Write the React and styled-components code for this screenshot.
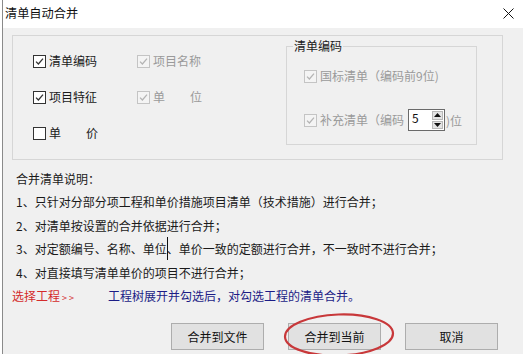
import React from "react";
import styled, { createGlobalStyle } from "styled-components";

const GlobalStyle = createGlobalStyle`
    html, body {
        margin: 0;
        padding: 0;
        background: #ffffff;
    }
    body {
        font-family: "Noto Sans CJK SC", "Noto Sans", sans-serif;
        font-size: 12px;
        color: #1a1a1a;
    }
`;

const CheckMark = ({ color }) => (
    <svg width="11" height="11" viewBox="0 0 11 11">
        <path d="M2 5.6 L4.4 8 L9 2.6" fill="none" stroke={color} strokeWidth="1.3" />
    </svg>
);

const CheckItem = ({ checked, disabled, children }) => (
    <Check $disabled={disabled}>
        <Box $disabled={disabled}>
            {checked && <CheckMark color={disabled ? "#b4b4b4" : "#333333"} />}
        </Box>
        {children}
    </Check>
);

const App = () => {
    return (
        <>
            <GlobalStyle />
            <Page>
                <Window>
                    <TitleBar>
                        <span>清单自动合并</span>
                        <svg width="11" height="11" viewBox="0 0 11 11">
                            <path d="M0.5 0.5 L10.5 10.5 M10.5 0.5 L0.5 10.5" stroke="#111" strokeWidth="1" />
                        </svg>
                    </TitleBar>
                    <Body>
                        <OuterGroup>
                            <Options>
                                <CheckItem checked>清单编码</CheckItem>
                                <CheckItem checked disabled>项目名称</CheckItem>
                                <CheckItem checked>项目特征</CheckItem>
                                <CheckItem checked disabled>
                                    单<Gap />位
                                </CheckItem>
                                <CheckItem>
                                    单<Gap />价
                                </CheckItem>
                            </Options>
                            <CodeGroup>
                                <legend>清单编码</legend>
                                <CodeRows>
                                    <CheckItem checked disabled>国标清单（编码前9位)</CheckItem>
                                    <CodeRow>
                                        <CheckItem checked disabled>补充清单（编码</CheckItem>
                                        <Spin>
                                            <span>5</span>
                                            <SpinButtons>
                                                <SpinBtn>
                                                    <svg width="7" height="4" viewBox="0 0 7 4">
                                                        <path d="M0 4 L3.5 0 L7 4 Z" fill="#111" />
                                                    </svg>
                                                </SpinBtn>
                                                <SpinBtn>
                                                    <svg width="7" height="4" viewBox="0 0 7 4">
                                                        <path d="M0 0 L3.5 4 L7 0 Z" fill="#111" />
                                                    </svg>
                                                </SpinBtn>
                                            </SpinButtons>
                                        </Spin>
                                        <Muted>)位</Muted>
                                    </CodeRow>
                                </CodeRows>
                            </CodeGroup>
                        </OuterGroup>
                        <Notes>
                            <div>合并清单说明：</div>
                            <div>1、只针对分部分项工程和单价措施项目清单（技术措施）进行合并；</div>
                            <div>2、对清单按设置的合并依据进行合并；</div>
                            <div>
                                3、对定额编号、名称、单位<Caret />、单价一致的定额进行合并，不一致时不进行合并；
                            </div>
                            <div>4、对直接填写清单单价的项目不进行合并；</div>
                        </Notes>
                        <Hint>
                            <PickLink>
                                选择工程<Arrows>&gt;&gt;</Arrows>
                            </PickLink>
                            <HintText>工程树展开并勾选后，对勾选工程的清单合并。</HintText>
                        </Hint>
                        <Footer>
                            <Button>合并到文件</Button>
                            <Marked>
                                <Button>合并到当前</Button>
                                <Ring viewBox="0 0 112 46" width="112" height="46">
                                    <ellipse
                                        cx="56"
                                        cy="23"
                                        rx="54"
                                        ry="20.5"
                                        fill="none"
                                        stroke="#c8383a"
                                        strokeWidth="2.2"
                                        transform="rotate(-2 56 23)"
                                    />
                                </Ring>
                            </Marked>
                            <Button>取消</Button>
                        </Footer>
                    </Body>
                </Window>
            </Page>
        </>
    );
};

const Page = styled.div`
    width: 523px;
    height: 354px;
    display: flex;
    overflow: hidden;
`;

const Window = styled.div`
    flex: 1;
    margin-left: 2px;
    border-left: 1px solid #8a8a8a;
    background: #f0f0f0;
    display: flex;
    flex-direction: column;
`;

const TitleBar = styled.div`
    height: 26px;
    flex: none;
    background: #ffffff;
    display: flex;
    align-items: center;
    justify-content: space-between;
    padding: 0 9px 2px 2px;
    color: #111;
    font-size: 12.2px;
`;

const Body = styled.div`
    flex: 1;
    padding: 7px 0 0 9px;
`;

const OuterGroup = styled.div`
    box-sizing: border-box;
    width: 491px;
    height: 125px;
    border: 1px solid #d6d6d6;
    display: flex;
    align-items: flex-start;
`;

const Options = styled.div`
    box-sizing: border-box;
    width: 273px;
    padding: 17px 0 0 20px;
    display: grid;
    grid-template-columns: 104px auto;
    grid-auto-rows: 16px;
    row-gap: 20px;
`;

const Check = styled.div`
    display: flex;
    align-items: center;
    gap: 3px;
    white-space: nowrap;
    line-height: 16px;
    color: ${(p) => (p.$disabled ? "#9a9a9a" : "#1a1a1a")};
`;

const Box = styled.span`
    box-sizing: border-box;
    width: 13px;
    height: 13px;
    flex: none;
    display: flex;
    align-items: center;
    justify-content: center;
    background: ${(p) => (p.$disabled ? "#f4f4f4" : "#ffffff")};
    border: 1px solid ${(p) => (p.$disabled ? "#c4c4c4" : "#333333")};
`;

const Gap = styled.span`
    display: inline-block;
    width: 19px;
`;

const CodeGroup = styled.fieldset`
    box-sizing: border-box;
    margin: 3px 0 0 0;
    width: 191px;
    height: 106px;
    padding: 0 0 0 6px;
    border: 1px solid #d6d6d6;
    legend {
        padding: 0 1px;
        line-height: 14px;
        color: #1a1a1a;
    }
`;

const CodeRows = styled.div`
    padding: 15px 0 0 11px;
    display: flex;
    flex-direction: column;
    gap: 25px;
`;

const CodeRow = styled.div`
    display: flex;
    align-items: center;
    height: 22px;
`;

const Spin = styled.div`
    box-sizing: border-box;
    margin-left: 4px;
    width: 37px;
    height: 22px;
    border: 1px solid #6a6a6a;
    background: #ffffff;
    display: flex;
    justify-content: space-between;
    span {
        padding-left: 3px;
        line-height: 15px;
        color: #111;
    }
`;

const SpinButtons = styled.div`
    width: 11px;
    display: flex;
    flex-direction: column;
    gap: 1px;
    padding: 1px 1px 1px 0;
`;

const SpinBtn = styled.div`
    flex: 1;
    background: #e4e4e4;
    border: 1px solid #b8b8b8;
    display: flex;
    align-items: center;
    justify-content: center;
`;

const Muted = styled.span`
    color: #9a9a9a;
    margin-left: 1px;
`;

const Notes = styled.div`
    margin-top: 7px;
    padding-left: 4px;
    line-height: 23.4px;
    white-space: nowrap;
    div {
        height: 23.4px;
    }
`;

const Caret = styled.span`
    display: inline-block;
    width: 0;
    height: 23px;
    border-left: 1px solid #111;
    margin-right: -1px;
    vertical-align: top;
`;

const Hint = styled.div`
    display: flex;
    line-height: 23.4px;
    white-space: nowrap;
`;

const PickLink = styled.span`
    width: 96px;
    color: #d42b2b;
`;

const Arrows = styled.span`
    font-size: 9px;
    letter-spacing: 2px;
    margin-left: 2px;
`;

const HintText = styled.span`
    color: #1c1c86;
`;

const Footer = styled.div`
    margin-top: 14px;
    padding-right: 25px;
    display: flex;
    justify-content: flex-end;
    gap: 24px;
`;

const Marked = styled.div`
    position: relative;
`;

const Ring = styled.svg`
    position: absolute;
    left: -5px;
    top: -11px;
    pointer-events: none;
`;

const Button = styled.button`
    box-sizing: border-box;
    width: 93px;
    height: 27px;
    background: #e1e1e1;
    border: 1px solid #adadad;
    border-radius: 0;
    font-family: inherit;
    font-size: 12px;
    color: #111;
    padding: 0;
`;

export default App;
